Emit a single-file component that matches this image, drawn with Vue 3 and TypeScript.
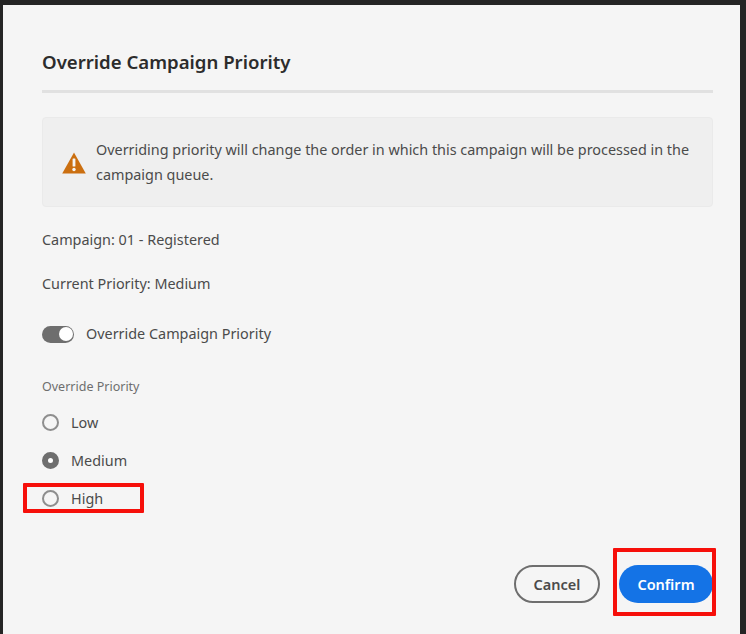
<script setup lang="ts">
import { ref } from 'vue'

const priorities = ['Low', 'Medium', 'High']
const selected = ref('Medium')
</script>

<template>
  <div class="page">
    <div class="dialog">
      <h2 class="title">Override Campaign Priority</h2>
      <div class="rule"></div>

      <div class="notice">
        <svg class="alert" width="24" height="22" viewBox="0 0 24 22">
          <path fill="#cb6f10" d="M12 0.5 L23.8 21.5 H0.2 Z" />
          <rect x="10.6" y="6.5" width="2.8" height="8" rx="0.6" fill="#f5f5f5" />
          <circle cx="12" cy="17.5" r="1.7" fill="#f5f5f5" />
        </svg>
        <p>Overriding priority will change the order in which this campaign will be processed in the campaign queue.</p>
      </div>

      <div class="info first">Campaign: 01 - Registered</div>
      <div class="info second">Current Priority: Medium</div>

      <div class="switch-row">
        <span class="switch"><span class="knob"></span></span>
        <span>Override Campaign Priority</span>
      </div>

      <div class="field-label">Override Priority</div>
      <div class="radios">
        <div v-for="p in priorities" :key="p" class="radio-row">
          <span class="radio" :class="{ on: selected === p }"></span>
          <span>{{ p }}</span>
        </div>
      </div>

      <div class="actions">
        <button class="btn cancel">Cancel</button>
        <button class="btn confirm">Confirm</button>
      </div>

      <div class="mark mark-high"></div>
      <div class="mark mark-confirm"></div>
    </div>
  </div>
</template>

<style>
html, body {
  margin: 0;
  background: #252525;
}
</style>

<style scoped>
.page {
  height: 634px;
  overflow: hidden;
  padding: 5px 6px 0 3px;
  box-sizing: border-box;
  background: #252525;
  font-family: "Noto Sans", "Open Sans", sans-serif;
  color: #4b4b4b;
  font-size: 14.4px;
}
.dialog {
  position: relative;
  height: 629px;
  box-sizing: border-box;
  padding: 41px 27px 0 39px;
  background: #f5f5f5;
}
.title {
  margin: 0;
  font-size: 18.6px;
  line-height: 32px;
  font-weight: 600;
  color: #2c2c2c;
}
.rule {
  height: 3px;
  margin-top: 12px;
  background: #e1e1e1;
}
.notice {
  display: flex;
  align-items: center;
  gap: 10px;
  height: 90px;
  margin-top: 24px;
  padding: 0 16px 0 19px;
  box-sizing: border-box;
  background: #efefef;
  border: 1px solid #eaeaea;
  border-radius: 4px;
}
.notice p {
  margin: 0;
  line-height: 25px;
}
.alert {
  flex: none;
  margin-top: 1px;
}
.info {
  line-height: 20px;
}
.first {
  margin-top: 23px;
}
.second {
  margin-top: 24px;
}
.switch-row {
  display: flex;
  align-items: center;
  gap: 12px;
  margin-top: 30px;
  line-height: 20px;
}
.switch {
  display: flex;
  justify-content: flex-end;
  align-items: center;
  width: 32px;
  height: 17px;
  padding: 0 1px;
  box-sizing: border-box;
  border-radius: 9px;
  background: #6e6e6e;
}
.knob {
  width: 14px;
  height: 14px;
  border-radius: 50%;
  background: #fff;
}
.field-label {
  margin-top: 35px;
  font-size: 12.5px;
  line-height: 16px;
  color: #6e6e6e;
}
.radios {
  display: flex;
  flex-direction: column;
  gap: 18px;
  margin-top: 17px;
}
.radio-row {
  display: flex;
  align-items: center;
  gap: 12px;
  height: 20px;
}
.radio {
  width: 17px;
  height: 17px;
  box-sizing: border-box;
  border: 2px solid #8e8e8e;
  border-radius: 50%;
  background: #f5f5f5;
}
.radio.on {
  border: 6px solid #6e6e6e;
  background: #fff;
}
.actions {
  display: flex;
  justify-content: flex-end;
  gap: 19px;
  margin-top: 57px;
}
.btn {
  height: 38px;
  border-radius: 19px;
  font-family: inherit;
  font-size: 14.5px;
  font-weight: 600;
  padding: 0;
}
.cancel {
  width: 86px;
  border: 2px solid #6e6e6e;
  background: transparent;
  color: #4b4b4b;
}
.confirm {
  width: 94px;
  border: none;
  background: #1473e6;
  color: #fff;
}
.mark {
  position: absolute;
  box-sizing: border-box;
  border: 4px solid #f60f0a;
  border-radius: 1px;
}
.mark-high {
  left: 20px;
  top: 478px;
  width: 121px;
  height: 30px;
}
.mark-confirm {
  left: 610px;
  top: 543px;
  width: 103px;
  height: 68px;
}
</style>
